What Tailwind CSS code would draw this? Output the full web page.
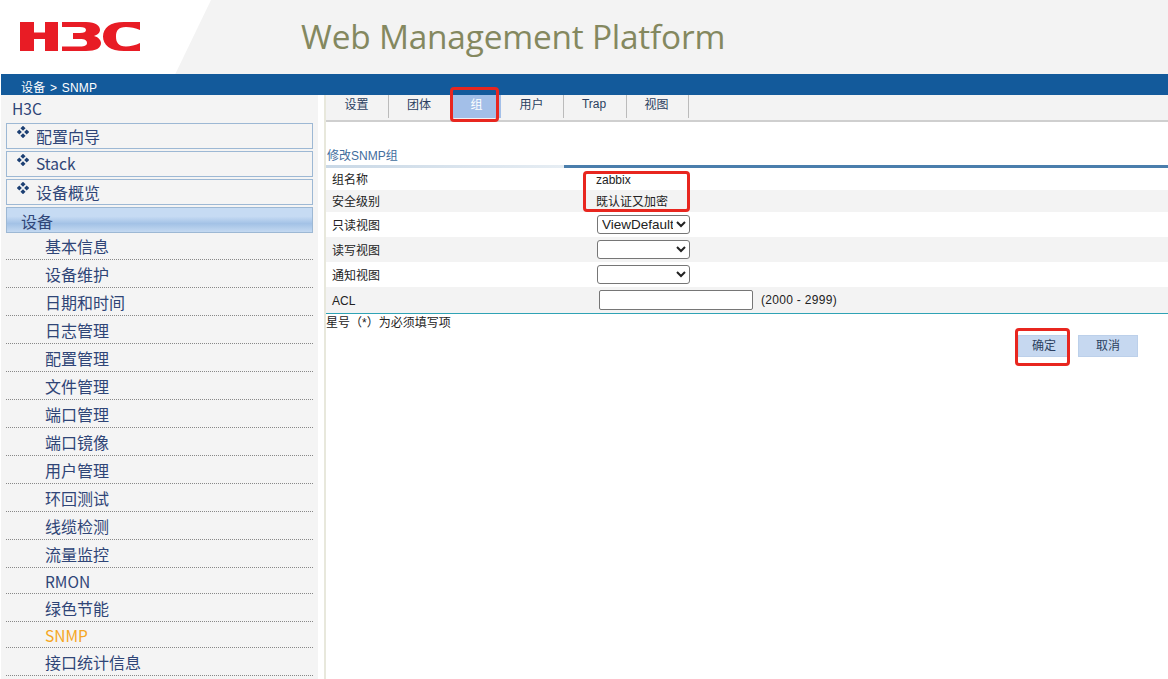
<!DOCTYPE html>
<html lang="zh-CN">
<head>
    <meta charset="UTF-8">
    <title>Web Management Platform</title>
    <script src="https://cdn.jsdelivr.net/npm/@tailwindcss/browser@4"></script>
</head>
<body class="bg-white overflow-hidden h-[679px] w-[1168px] relative font-['Liberation_Sans','Noto_Sans_CJK_SC',sans-serif] text-[12px] text-[#222]">
    <!-- Header -->
    <header class="h-[74px] ml-px bg-[#f3f3f3] flex items-center relative overflow-hidden">
        <div class="absolute left-0 top-0 h-[74px] w-[210px] bg-white [clip-path:polygon(0_0,100%_0,83%_100%,0_100%)]"></div>
        <svg class="relative ml-[19px] mt-[-2px] shrink-0" width="121" height="29" viewBox="0 0 121 29" fill="#e81c25">
            <rect x="0" y="0" width="14" height="29"/>
            <rect x="25" y="0" width="13" height="29"/>
            <rect x="13" y="10.5" width="13" height="6.5"/>
            <path d="M42 0 H66 C76 0 80 4 80 8 C80 11 77 13 74 14 C78 15 81 18 81 21 C81 26 76 29 66 29 H42 V24.5 H60 C65 24.5 67 23 67 21 C67 18.5 65 17 60 17 H53 V11 H60 C64 11 66 10 66 8 C66 6 64 5 60 5 H42 Z"/>
            <path d="M104 0 H120 V8 C116 6 110 5 106 5 C98 5 96 9 96 14.5 C96 20 98 24.5 106 24.5 C110 24.5 116 23 120 21 V29 H104 C90 29 83 23 83 14.5 C83 6 90 0 104 0 Z"/>
        </svg>
        <h1 class="relative ml-[160px] mt-[-1px] text-[33.4px] text-[#84885f] font-['Open_Sans',sans-serif] whitespace-nowrap tracking-[-0.2px]">Web Management Platform</h1>
    </header>
    <!-- Breadcrumb -->
    <div class="h-[21px] ml-px bg-[#135a9b] text-white text-[12px] pl-5 pt-[7px] leading-[15px] tracking-[0.2px]">设备 <span class="mx-px">&gt;</span> SNMP</div>

    <div class="flex h-[584px]">
        <!-- Sidebar -->
        <aside class="w-[317px] ml-px bg-[#f4f4f4] px-[5px] shrink-0 overflow-hidden font-['Noto_Sans_CJK_SC',sans-serif] text-[16px] text-[#2f4577]">
            <div class="h-[28px] pl-[6px] leading-[26px] text-[15.5px]">H3C</div>
            <div class="flex flex-col gap-[2px]">
                <div class="h-[26px] border border-[#9db8d4] flex relative pl-[29px] leading-[24px]">
                    <svg class="absolute left-[10px] top-[2px]" width="12" height="12" viewBox="0 0 12 12" fill="#1c3f73"><rect x="4.2" y="0.5" width="3.6" height="3.6" transform="rotate(45 6 2.3)"/><rect x="4.2" y="7.9" width="3.6" height="3.6" transform="rotate(45 6 9.7)"/><rect x="0.5" y="4.2" width="3.6" height="3.6" transform="rotate(45 2.3 6)"/><rect x="7.9" y="4.2" width="3.6" height="3.6" transform="rotate(45 9.7 6)"/></svg>
                    配置向导
                </div>
                <div class="h-[26px] border border-[#9db8d4] flex relative pl-[29px] leading-[22px] text-[15.5px]">
                    <svg class="absolute left-[10px] top-[2px]" width="12" height="12" viewBox="0 0 12 12" fill="#1c3f73"><rect x="4.2" y="0.5" width="3.6" height="3.6" transform="rotate(45 6 2.3)"/><rect x="4.2" y="7.9" width="3.6" height="3.6" transform="rotate(45 6 9.7)"/><rect x="0.5" y="4.2" width="3.6" height="3.6" transform="rotate(45 2.3 6)"/><rect x="7.9" y="4.2" width="3.6" height="3.6" transform="rotate(45 9.7 6)"/></svg>
                    Stack
                </div>
                <div class="h-[26px] border border-[#9db8d4] flex relative pl-[29px] leading-[24px]">
                    <svg class="absolute left-[10px] top-[2px]" width="12" height="12" viewBox="0 0 12 12" fill="#1c3f73"><rect x="4.2" y="0.5" width="3.6" height="3.6" transform="rotate(45 6 2.3)"/><rect x="4.2" y="7.9" width="3.6" height="3.6" transform="rotate(45 6 9.7)"/><rect x="0.5" y="4.2" width="3.6" height="3.6" transform="rotate(45 2.3 6)"/><rect x="7.9" y="4.2" width="3.6" height="3.6" transform="rotate(45 9.7 6)"/></svg>
                    设备概览
                </div>
                <div class="h-[26px] border border-[#9db8d4] pl-[14px] leading-[26px] bg-[linear-gradient(#c6dbf3_0%,#c6dbf3_35%,#a3c2e6_65%,#c4d9f1_100%)]">设备</div>
            </div>
            <ul class="pl-0">
                <li class="h-[27px] pl-[39px] leading-[27px] border-b border-dotted border-[#888]">基本信息</li>
                <li class="h-[28px] pl-[39px] leading-[29px] border-b border-dotted border-[#888]">设备维护</li>
                <li class="h-[28px] pl-[39px] leading-[29px] border-b border-dotted border-[#888]">日期和时间</li>
                <li class="h-[28px] pl-[39px] leading-[29px] border-b border-dotted border-[#888]">日志管理</li>
                <li class="h-[28px] pl-[39px] leading-[29px] border-b border-dotted border-[#888]">配置管理</li>
                <li class="h-[28px] pl-[39px] leading-[29px] border-b border-dotted border-[#888]">文件管理</li>
                <li class="h-[28px] pl-[39px] leading-[29px] border-b border-dotted border-[#888]">端口管理</li>
                <li class="h-[28px] pl-[39px] leading-[29px] border-b border-dotted border-[#888]">端口镜像</li>
                <li class="h-[28px] pl-[39px] leading-[29px] border-b border-dotted border-[#888]">用户管理</li>
                <li class="h-[28px] pl-[39px] leading-[29px] border-b border-dotted border-[#888]">环回测试</li>
                <li class="h-[28px] pl-[39px] leading-[29px] border-b border-dotted border-[#888]">线缆检测</li>
                <li class="h-[28px] pl-[39px] leading-[29px] border-b border-dotted border-[#888]">流量监控</li>
                <li class="h-[26px] pl-[39px] leading-[26px] text-[15.5px] border-b border-dotted border-[#888]">RMON</li>
                <li class="h-[28px] pl-[39px] leading-[28px] border-b border-dotted border-[#888]">绿色节能</li>
                <li class="h-[26px] pl-[39px] leading-[26px] text-[15.5px] border-b border-dotted border-[#888] text-[#f5a623]">SNMP</li>
                <li class="h-[28px] pl-[39px] leading-[28px] border-b border-dotted border-[#888]">接口统计信息</li>
            </ul>
        </aside>
        <div class="w-[6px] shrink-0"></div>
        <div class="w-[2px] shrink-0 bg-[#e8e8dc]"></div>

        <!-- Main -->
        <main class="flex-1 min-w-0">
            <nav class="h-[27px] bg-[#f3f3f3] border-b-2 border-[#cfcfcf]">
                <div class="flex h-[23px] text-[#2b3f5f]">
                    <a class="w-[63px] pr-px text-center leading-[20px] border-r border-[#bbb]">设置</a>
                    <a class="w-[63px] pr-[2px] text-center leading-[20px] border-r border-[#bbb]">团体</a>
                    <a class="w-[49px] text-center leading-[20px] bg-[#a3bfe8] text-white">组</a>
                    <a class="w-[63px] pr-px text-center leading-[20px] border-r border-[#bbb]">用户</a>
                    <a class="w-[63px] pr-[2px] text-center leading-[18px] border-r border-[#bbb]">Trap</a>
                    <a class="w-[62px] pr-[2px] text-center leading-[20px] border-r border-[#bbb]">视图</a>
                </div>
            </nav>
            <h2 class="mt-[26px] h-[17px] pl-px leading-[17px] text-[#3f6d9d]">修改SNMP组</h2>
            <div class="h-[3px] flex">
                <div class="w-[238px] bg-[linear-gradient(to_right,#c9d8e6,#e6edf3)]"></div>
                <div class="flex-1 bg-[#4a7eac]"></div>
            </div>
            <!-- Form rows -->
            <div class="border-b border-[#2fa3b5]">
                <div class="h-[22px] flex items-center pl-[6px] pt-[2px]"><span class="w-[264px]">组名称</span><span>zabbix</span></div>
                <div class="h-[22px] flex items-center pl-[6px] pt-[2px] bg-[#f3f3f3]"><span class="w-[251px]">安全级别</span><span class="ml-[13px]">既认证又加密</span></div>
                <div class="h-[25px] flex items-center pl-[6px]">
                    <span class="w-[265px] pt-[2px]">只读视图</span>
                    <select class="w-[93px] h-[19px] pr-0 border border-[#767676] rounded-[3px] bg-white text-[13.5px] font-['Liberation_Sans',sans-serif]"><option>ViewDefault</option></select>
                </div>
                <div class="h-[25px] flex items-center pl-[6px] bg-[#f3f3f3]">
                    <span class="w-[265px] pt-[2px]">读写视图</span>
                    <select class="w-[93px] h-[19px] border border-[#767676] rounded-[3px] bg-white text-[14px]"><option></option></select>
                </div>
                <div class="h-[25px] flex items-center pl-[6px]">
                    <span class="w-[265px] pt-[2px]">通知视图</span>
                    <select class="w-[93px] h-[19px] border border-[#767676] rounded-[3px] bg-white text-[14px]"><option></option></select>
                </div>
                <div class="h-[26px] flex items-center pl-[6px] bg-[#f3f3f3]">
                    <span class="w-[267px] pt-[2px]">ACL</span>
                    <input type="text" class="w-[154px] h-[20px] border border-[#767676] rounded-[2px] bg-white">
                    <span class="ml-[8px] tracking-[0.3px]">(2000 - 2999)</span>
                </div>
            </div>
            <p class="mt-px leading-[16px]">星号（*）为必须填写项</p>
            <div class="flex justify-end gap-[10px] pr-[30px] mt-[4px]">
                <button class="w-[50px] h-[22px] pl-[2px] bg-[#c6d8f0] border border-[#bcd0ea] text-[#2b3f5f]">确定</button>
                <button class="w-[60px] h-[22px] bg-[#c6d8f0] border border-[#bcd0ea] text-[#2b3f5f]">取消</button>
            </div>
        </main>
    </div>

    <!-- Red annotation boxes -->
    <div class="absolute left-[450px] top-[87px] w-[49px] h-[35px] border-[3px] border-[#e8261f] rounded-[4px]"></div>
    <div class="absolute left-[583px] top-[171px] w-[107px] h-[41px] border-[3px] border-[#e8261f] rounded-[4px]"></div>
    <div class="absolute left-[1015px] top-[328px] w-[55px] h-[38px] border-[3px] border-[#e8261f] rounded-[4px]"></div>
</body>
</html>
